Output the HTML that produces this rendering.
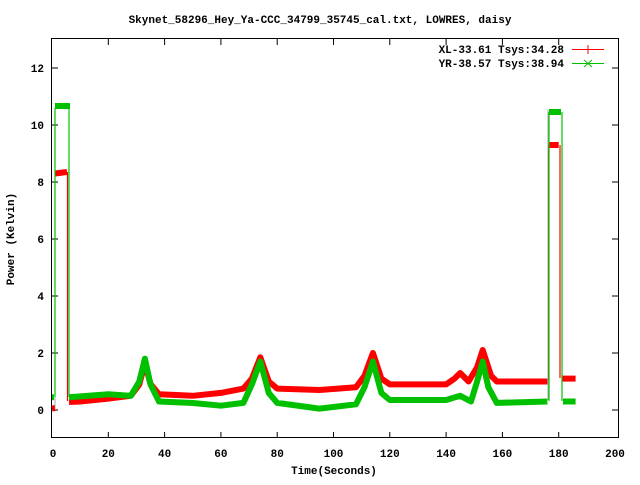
<!DOCTYPE html>
<html><head><meta charset="utf-8"><style>
html,body{margin:0;padding:0;background:#fff;}
svg text{font-family:"Liberation Mono",monospace;font-weight:bold;font-size:11px;fill:#000;}
</style></head><body>
<svg width="640" height="480" viewBox="0 0 640 480" xmlns="http://www.w3.org/2000/svg">
<rect width="640" height="480" fill="#fff"/>
<text x="320" y="23" text-anchor="middle">Skynet_58296_Hey_Ya-CCC_34799_35745_cal.txt, LOWRES, daisy</text>
<rect x="51.5" y="38.5" width="567" height="399" fill="none" stroke="#000" stroke-width="1"/>
<g stroke="#000" stroke-width="1">
<line x1="52" y1="410" x2="58" y2="410"/><line x1="612" y1="410" x2="618" y2="410"/>
<line x1="52" y1="353" x2="58" y2="353"/><line x1="612" y1="353" x2="618" y2="353"/>
<line x1="52" y1="296" x2="58" y2="296"/><line x1="612" y1="296" x2="618" y2="296"/>
<line x1="52" y1="239" x2="58" y2="239"/><line x1="612" y1="239" x2="618" y2="239"/>
<line x1="52" y1="182" x2="58" y2="182"/><line x1="612" y1="182" x2="618" y2="182"/>
<line x1="52" y1="125" x2="58" y2="125"/><line x1="612" y1="125" x2="618" y2="125"/>
<line x1="52" y1="68" x2="58" y2="68"/><line x1="612" y1="68" x2="618" y2="68"/>
<line x1="108.3" y1="438" x2="108.3" y2="432"/><line x1="108.3" y1="39" x2="108.3" y2="45"/>
<line x1="164.6" y1="438" x2="164.6" y2="432"/><line x1="164.6" y1="39" x2="164.6" y2="45"/>
<line x1="220.9" y1="438" x2="220.9" y2="432"/><line x1="220.9" y1="39" x2="220.9" y2="45"/>
<line x1="277.2" y1="438" x2="277.2" y2="432"/><line x1="277.2" y1="39" x2="277.2" y2="45"/>
<line x1="333.5" y1="438" x2="333.5" y2="432"/><line x1="333.5" y1="39" x2="333.5" y2="45"/>
<line x1="389.8" y1="438" x2="389.8" y2="432"/><line x1="389.8" y1="39" x2="389.8" y2="45"/>
<line x1="446.1" y1="438" x2="446.1" y2="432"/><line x1="446.1" y1="39" x2="446.1" y2="45"/>
<line x1="502.4" y1="438" x2="502.4" y2="432"/><line x1="502.4" y1="39" x2="502.4" y2="45"/>
<line x1="558.7" y1="438" x2="558.7" y2="432"/><line x1="558.7" y1="39" x2="558.7" y2="45"/>
</g>
<g text-anchor="end">
<text x="44" y="414">0</text><text x="44" y="357">2</text><text x="44" y="300">4</text>
<text x="44" y="243">6</text><text x="44" y="186">8</text><text x="44" y="129">10</text><text x="44" y="72">12</text>
</g>
<g text-anchor="middle">
<text x="53" y="457">0</text><text x="108.3" y="457">20</text><text x="164.6" y="457">40</text>
<text x="220.9" y="457">60</text><text x="277.2" y="457">80</text><text x="333.5" y="457">100</text>
<text x="389.8" y="457">120</text><text x="446.1" y="457">140</text><text x="502.4" y="457">160</text>
<text x="558.7" y="457">180</text><text x="615" y="457">200</text>
<text x="334" y="474">Time(Seconds)</text>
</g>
<text transform="translate(14,239) rotate(-90)" text-anchor="middle">Power (Kelvin)</text>
<text x="564" y="53" text-anchor="end">XL-33.61 Tsys:34.28</text>
<text x="564" y="67" text-anchor="end">YR-38.57 Tsys:38.94</text>
<line x1="572" y1="49.5" x2="604" y2="49.5" stroke="#f00"/><line x1="588" y1="45" x2="588" y2="54" stroke="#f00"/>
<line x1="572" y1="63.5" x2="604" y2="63.5" stroke="#00c000"/>
<path d="M584 60l8 7M584 67l8-7" stroke="#00c000"/>
<g stroke="#000" stroke-width="0.6" fill="none" opacity="0.6">
<line x1="55" y1="408" x2="55" y2="110"/><line x1="548" y1="400" x2="548" y2="110"/>
</g>
<g fill="none" stroke="#f00" stroke-linejoin="round">
<polyline stroke-width="1.2" points="67.5,172 67.5,401"/>
<polyline stroke-width="1.2" points="548.8,380 548.8,145"/>
<polyline stroke-width="1.2" points="560,145 560,378"/>
<polyline stroke-width="6" points="52,408.6 55,408"/>
<polyline stroke-width="6" points="55,173.5 67,172"/>
<polyline stroke-width="6" points="69,402 80.2,401.5 108.3,398.6 130.8,395.8 139.3,384.4 144.9,363 150.5,384 159,394.3 192.8,395.8 220.9,392.9 243.4,388.6 251.9,378.6 260.3,357.3 268.8,381.5 277.2,388.6 319.4,390 356,387.2 364.5,375.8 372.9,353 381.4,378.6 389.8,384.4 446.1,384.4 454.5,378.6 460.2,373 468.6,381.5 477.1,367.3 482.7,350 491.1,375.8 496.8,381.5 547.4,381.5"/>
<polyline stroke-width="6" points="549,145 558.7,145"/>
<polyline stroke-width="6" points="562,378.6 575.6,378.6"/>
</g>
<g fill="none" stroke="#00c000" stroke-linejoin="round">
<polyline stroke-width="1.2" points="55,397 55,108"/>
<polyline stroke-width="1.2" points="69,108 69,397"/>
<polyline stroke-width="1.2" points="549,112 549,401"/>
<polyline stroke-width="1.2" points="562,112 562,401"/>
<polyline stroke-width="6" points="52,397.2 54,397.2"/>
<polyline stroke-width="6" points="55,106 70,106"/>
<polyline stroke-width="6" points="69,397.2 108.3,394.3 130.8,395.8 139.3,381.5 144.9,358.7 150.5,384.4 159,401.5 192.8,403 220.9,405.7 243.4,402.9 251.9,384.4 260.3,361.5 268.8,393 277.2,402.9 319.4,408.6 356,404.3 364.5,387.2 372.9,361.5 381.4,393 389.8,400 446.1,400 460.2,395.8 471,401.5 477.1,381.5 482.7,361.5 488.3,387.2 496.8,402.9 547.4,401.5"/>
<polyline stroke-width="6" points="549,112 561,112"/>
<polyline stroke-width="6" points="563,401.5 575.6,401.5"/>
</g>
</svg>
</body></html>
